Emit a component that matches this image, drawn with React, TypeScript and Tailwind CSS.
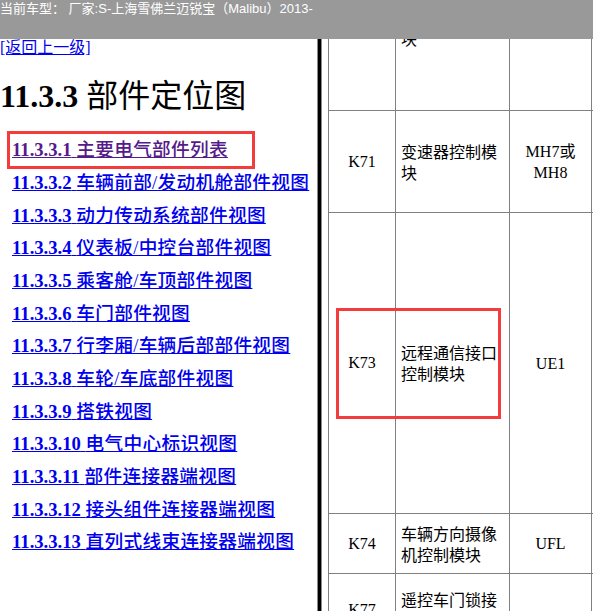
import React from "react";

const links: [string, string][] = [
  ["11.3.3.1", "主要电气部件列表"],
  ["11.3.3.2", "车辆前部/发动机舱部件视图"],
  ["11.3.3.3", "动力传动系统部件视图"],
  ["11.3.3.4", "仪表板/中控台部件视图"],
  ["11.3.3.5", "乘客舱/车顶部件视图"],
  ["11.3.3.6", "车门部件视图"],
  ["11.3.3.7", "行李厢/车辆后部部件视图"],
  ["11.3.3.8", "车轮/车底部件视图"],
  ["11.3.3.9", "搭铁视图"],
  ["11.3.3.10", "电气中心标识视图"],
  ["11.3.3.11", "部件连接器端视图"],
  ["11.3.3.12", "接头组件连接器端视图"],
  ["11.3.3.13", "直列式线束连接器端视图"],
];

type Row = { h: string; code: string; name: string; loc: React.ReactNode };

const rows: Row[] = [
  { h: "h-[166px]", code: "", name: "发动机控制模块", loc: "" },
  { h: "h-[102px]", code: "K71", name: "变速器控制模块", loc: (<>MH7或<br />MH8</>) },
  { h: "h-[301px]", code: "K73", name: "远程通信接口控制模块", loc: "UE1" },
  { h: "h-[60px]", code: "K74", name: "车辆方向摄像机控制模块", loc: "UFL" },
  { h: "h-[73px]", code: "K77", name: "遥控车门锁接收器", loc: "" },
];

const serif = "font-['Liberation_Serif','Noto_Sans_CJK_SC',serif]";

export default function App() {
  return (
    <div className="w-[593px] h-[611px] overflow-hidden bg-white flex flex-col">
      {/* current vehicle bar */}
      <div className="h-[39px] shrink-0 bg-[#999999] text-white text-[13px] leading-[18px] whitespace-nowrap font-['Liberation_Sans','Noto_Sans_CJK_SC',sans-serif]">
        当前车型： 厂家:S-上海雪佛兰迈锐宝（Malibu）2013-
      </div>

      <div className="flex flex-1 min-h-0">
        {/* navigation frame */}
        <div className={`relative w-[317px] shrink-0 overflow-hidden ${serif}`}>
          <a href="#" className="block h-[18px] leading-[18px] text-[16px] text-[#0000ee] underline whitespace-nowrap">
            [返回上一级]
          </a>
          <h1 className="mt-[21px] h-[37px] leading-[37px] text-[32px] text-black whitespace-nowrap">
            <span className="font-bold">11.3.3</span> 部件定位图
          </h1>
          <div className="mt-[19px] pl-[12px] flex flex-col">
            {links.map(([num, title], i) => (
              <div key={num} className="h-[32.67px] flex items-center whitespace-nowrap">
                <a
                  href="#"
                  className={`text-[18.67px] leading-[22px] underline ${i === 0 ? "text-[#551a8b]" : "text-[#0000ee]"}`}
                >
                  <span className="font-bold">{num}</span> <span className="font-medium tracking-[0.3px]">{title}</span>
                </a>
              </div>
            ))}
          </div>
          <div className="absolute left-[7px] top-[92px] w-[248px] h-[38px] border-[3px] border-[#f43c3c]" />
        </div>

        {/* frame border */}
        <div className="w-[5px] shrink-0 bg-black border-x border-[#8a8a8a]" />

        {/* component table frame */}
        <div className="relative flex-1 overflow-hidden pl-[6px]">
          <div className="mt-[-94px] w-max border-l border-[#808080] flex flex-col">
            {rows.map((r, i) => (
              <div key={i} className={`${r.h} flex border-b border-[#808080]`}>
                <div className={`w-[67px] border-r border-[#808080] flex items-center justify-center text-[16px] text-black ${serif}`}>
                  {r.code}
                </div>
                <div className="w-[114px] border-r border-[#808080] flex items-center pl-[5px] pr-[5px] text-[16px] leading-[21px] text-black font-['Noto_Sans_CJK_SC',sans-serif]">
                  <span>{r.name}</span>
                </div>
                <div className={`w-[82px] border-r border-[#808080] flex items-center justify-center text-center text-[16px] leading-[21px] text-black ${serif}`}>
                  <span>{r.loc}</span>
                </div>
                <div className="w-[80px] border-r border-[#808080]" />
              </div>
            ))}
          </div>
          <div className="absolute left-[14px] top-[269px] w-[165px] h-[111px] border-[3px] border-[#f43c3c]" />
        </div>
      </div>
    </div>
  );
}
